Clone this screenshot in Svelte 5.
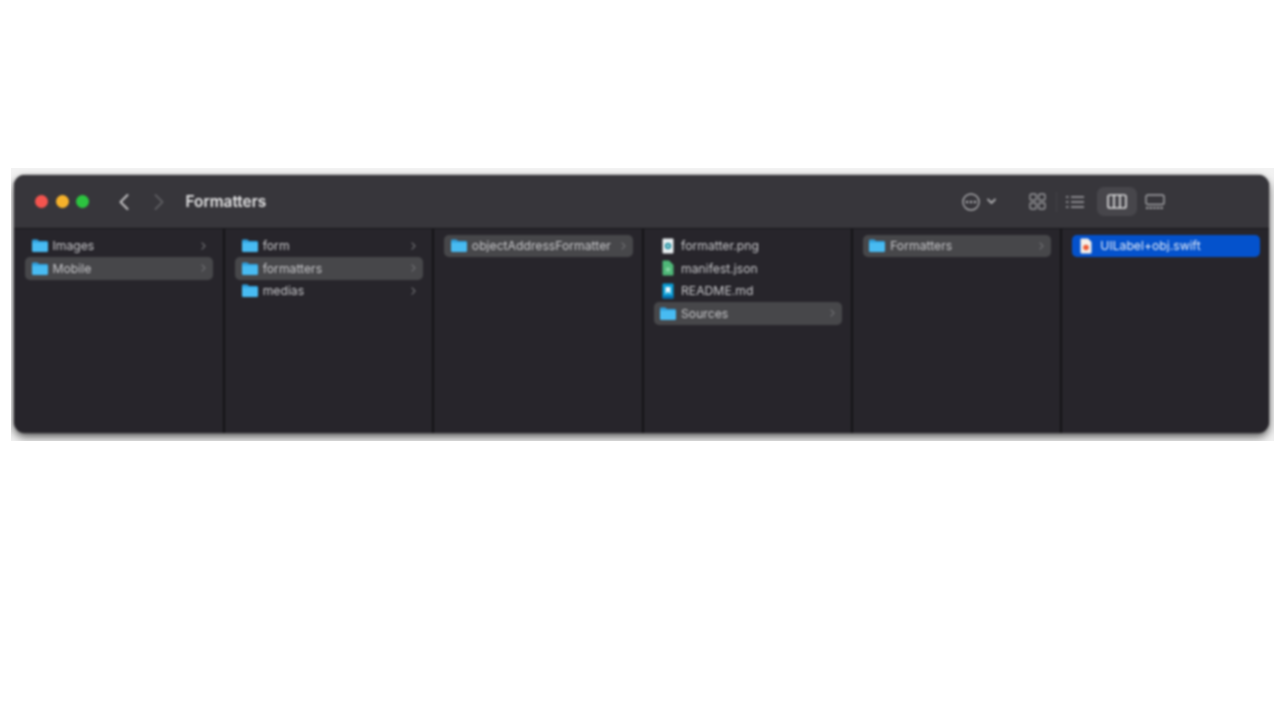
<script lang="ts">
  type Row = { name: string; icon?: string; active?: boolean; selected?: boolean; arrow?: boolean };

  const columns: Row[][] = [
    [
      { name: 'Images', arrow: true },
      { name: 'Mobile', arrow: true, active: true }
    ],
    [
      { name: 'form', arrow: true },
      { name: 'formatters', arrow: true, active: true },
      { name: 'medias', arrow: true }
    ],
    [{ name: 'objectAddressFormatter', arrow: true, active: true }],
    [
      { name: 'formatter.png', icon: 'png' },
      { name: 'manifest.json', icon: 'json' },
      { name: 'README.md', icon: 'md' },
      { name: 'Sources', arrow: true, active: true }
    ],
    [{ name: 'Formatters', arrow: true, active: true }],
    [{ name: 'UILabel+obj.swift', icon: 'swift', selected: true }]
  ];
</script>

<div class="shot">
  <div class="window">
    <header class="toolbar">
      <div class="lights">
        <span class="light red"></span>
        <span class="light yellow"></span>
        <span class="light green"></span>
      </div>
      <div class="nav">
        <svg width="12" height="18" viewBox="0 0 12 18" fill="none" stroke="#c4c4c6" stroke-width="1.9" stroke-linecap="round" stroke-linejoin="round"><path d="M9.5 2 L2.5 9 L9.5 16"/></svg>
        <svg width="12" height="18" viewBox="0 0 12 18" fill="none" stroke="#5c5c60" stroke-width="1.8" stroke-linecap="round" stroke-linejoin="round"><path d="M2.5 2 L9.5 9 L2.5 16"/></svg>
      </div>
      <h1 class="title">Formatters</h1>
      <div class="tools">
        <div class="more">
          <svg width="20" height="20" viewBox="0 0 20 20" fill="none" stroke="#a9a9ac" stroke-width="1.4"><circle cx="10" cy="10" r="8"/><g fill="#b4b4b7" stroke="none"><circle cx="6" cy="10" r="1.25"/><circle cx="10" cy="10" r="1.25"/><circle cx="14" cy="10" r="1.25"/></g></svg>
          <svg width="9" height="7" viewBox="0 0 9 7" fill="none" stroke="#a9a9ac" stroke-width="1.8" stroke-linecap="round" stroke-linejoin="round"><path d="M1 1.5 L4.5 5 L8 1.5"/></svg>
        </div>
        <div class="views">
          <span class="view grid">
            <svg width="17" height="17" viewBox="0 0 17 17" fill="none" stroke="#97979a" stroke-width="1.4"><rect x="1" y="1" width="6.3" height="6.3" rx="1.6"/><rect x="9.7" y="1" width="6.3" height="6.3" rx="1.6"/><rect x="1" y="9.7" width="6.3" height="6.3" rx="1.6"/><rect x="9.7" y="9.7" width="6.3" height="6.3" rx="1.6"/></svg>
          </span>
          <span class="view">
            <svg width="18" height="14" viewBox="0 0 18 14" fill="none" stroke="#a3a3a6" stroke-width="1.5"><path d="M0 2H2.5M0 7H2.5M0 12H2.5M5 2H18M5 7H18M5 12H18"/></svg>
          </span>
          <span class="view on">
            <svg width="20" height="15" viewBox="0 0 20 15" fill="none" stroke="#d6d6d8" stroke-width="1.7"><rect x="1" y="1" width="18" height="13" rx="2"/><path d="M7 1V14M13 1V14"/></svg>
          </span>
          <span class="view">
            <svg width="20" height="16" viewBox="0 0 20 16" fill="none" stroke="#a3a3a6" stroke-width="1.4"><rect x="1" y="1" width="18" height="9.5" rx="2"/><path d="M1 14H19" stroke-dasharray="2.4 1.2" stroke-width="1.8"/></svg>
          </span>
        </div>
      </div>
    </header>

    <main class="browser">
      {#each columns as rows}
        <section class="column">
          {#each rows as row}
            <div class="row" class:active={row.active} class:selected={row.selected}>
              {#if row.icon === 'png'}
                <svg class="icon file" width="12" height="16" viewBox="0 0 12 16"><rect x="0.5" y="0.5" width="11" height="15" rx="1" fill="#e8eef0"/><circle cx="6" cy="8" r="3.2" fill="#2a93a3"/><circle cx="6" cy="8" r="1.2" fill="#bfe6ea"/></svg>
              {:else if row.icon === 'json'}
                <svg class="icon file" width="12" height="16" viewBox="0 0 12 16"><path d="M0.5 1.5Q0.5 0.5 1.5 0.5H7L11.5 5V14.5Q11.5 15.5 10.5 15.5H1.5Q0.5 15.5 0.5 14.5Z" fill="#4fb878"/><circle cx="6" cy="9.5" r="2.2" fill="#86d6a2"/></svg>
              {:else if row.icon === 'md'}
                <svg class="icon file" width="12" height="16" viewBox="0 0 12 16"><rect x="0.5" y="0.5" width="11" height="15" rx="1" fill="#0a9fd8"/><path d="M3.5 4V11L6 8.8L8.5 11V4Z" fill="#eaf8fd"/><rect x="0.5" y="13" width="11" height="2.5" fill="#0769a8"/></svg>
              {:else if row.icon === 'swift'}
                <svg class="icon file" width="12" height="16" viewBox="0 0 12 16"><path d="M0.5 1.5Q0.5 0.5 1.5 0.5H8L11.5 4V14.5Q11.5 15.5 10.5 15.5H1.5Q0.5 15.5 0.5 14.5Z" fill="#f6efe8"/><circle cx="6" cy="9.5" r="2.8" fill="#ee5a35"/></svg>
              {:else}
                <svg class="icon" width="16" height="13" viewBox="0 0 16 13"><path d="M0 1.6Q0 0.4 1.2 0.4H5.4L7 2H14.6Q16 2 16 3.4V11.6Q16 13 14.6 13H1.4Q0 13 0 11.6Z" fill="#2f9fdc"/><path d="M0 3.4H16V11.6Q16 13 14.6 13H1.4Q0 13 0 11.6Z" fill="#48bbf2"/></svg>
              {/if}
              <span class="name">{row.name}</span>
              {#if row.arrow}
                <svg class="chevron" width="5" height="8" viewBox="0 0 5 8" fill="none" stroke="#6e6e71" stroke-width="1.1" stroke-linecap="round" stroke-linejoin="round"><path d="M1 0.8 L4 4 L1 7.2"/></svg>
              {/if}
            </div>
          {/each}
        </section>
      {/each}
    </main>
  </div>
</div>

<style>
  :global(body) {
    margin: 0;
    background: #fff;
  }

  .shot {
    width: 1263px;
    height: 273px;
    margin: 168px 0 0 11px;
    padding: 7px 5px 8px 3px;
    box-sizing: border-box;
    overflow: hidden;
    background: #f2f2f2;
    font-family: "Inter", "Liberation Sans", sans-serif;
  }

  .window {
    height: 258px;
    display: flex;
    flex-direction: column;
    border-radius: 11px;
    overflow: hidden;
    background: #27252b;
    box-shadow: 0 4px 9px rgba(0, 0, 0, 0.62), 0 0 2px rgba(0, 0, 0, 0.5);
    filter: blur(0.8px);
  }

  .toolbar {
    height: 54px;
    flex: none;
    display: flex;
    align-items: center;
    padding: 0 0 0 21px;
    box-sizing: border-box;
    background: #37363b;
    border-bottom: 1px solid #17161a;
  }

  .lights {
    display: flex;
    gap: 7.5px;
  }

  .light {
    width: 13px;
    height: 13px;
    border-radius: 50%;
  }

  .red { background: #f4544e; }
  .yellow { background: #f6b22b; }
  .green { background: #2cc43f; }

  .nav {
    display: flex;
    gap: 23px;
    margin-left: 28.5px;
  }

  .title {
    margin: 0 0 0 21px;
    font-size: 15.4px;
    font-weight: 600;
    color: #e4e4e5;
  }

  .tools {
    margin-left: auto;
    margin-right: 95.5px;
    display: flex;
    align-items: center;
  }

  .more {
    display: flex;
    align-items: center;
    gap: 6px;
    margin-right: 23px;
  }

  .views {
    display: flex;
    align-items: center;
  }

  .view {
    width: 37px;
    height: 28px;
    display: flex;
    align-items: center;
    justify-content: center;
    border-radius: 7px;
  }

  .view.grid {
    border-right: 1px solid #434247;
    margin-right: -1px;
    height: 20px;
    border-radius: 0;
  }

  .view.on {
    width: 40px;
    height: 29px;
    margin-left: 3.5px;
    background: #47464b;
  }

  .browser {
    flex: 1;
    display: grid;
    grid-template-columns: repeat(6, 1fr);
  }

  .column {
    display: flex;
    flex-direction: column;
    padding: 5.5px 9px 0 10px;
    border-left: 2px solid #151417;
  }

  .column:first-child {
    padding: 5.5px 10px 0 11px;
    border-left: none;
  }

  .row {
    height: 22.5px;
    flex: none;
    display: flex;
    align-items: center;
    padding: 0 7px 0 6.5px;
    border-radius: 5px;
    font-size: 12.2px;
    color: #c6c6c9;
  }

  .row.active {
    background: #47474a;
  }

  .row.selected {
    background: #0452cc;
    color: #e6eefb;
  }

  .icon {
    flex: none;
    margin-right: 5px;
  }

  .icon.file {
    margin: 0 7.5px 0 1.5px;
  }

  .row.selected .icon.file {
    margin-right: 8.5px;
  }

  .name {
    flex: 1;
    white-space: nowrap;
  }

  .chevron {
    flex: none;
  }
</style>
